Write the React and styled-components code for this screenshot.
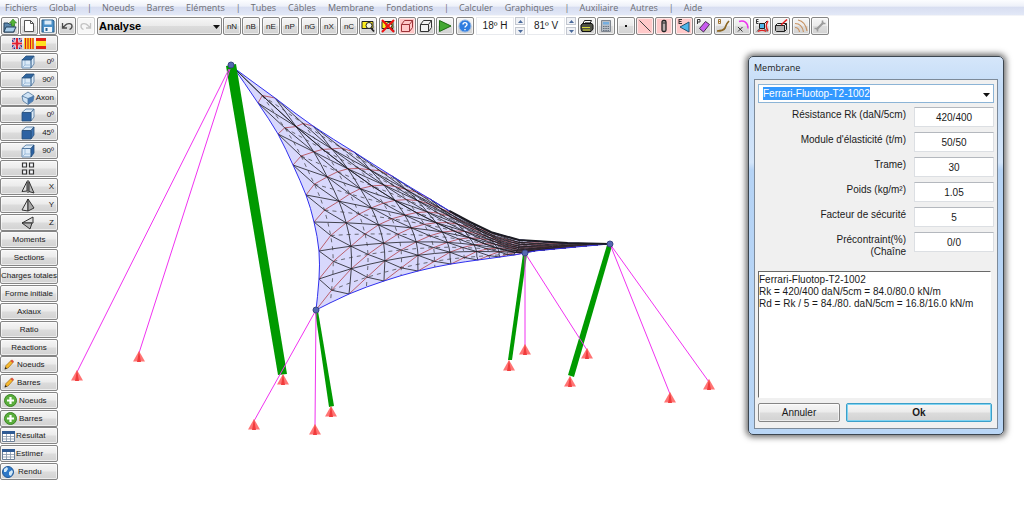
import React from "react";
import styled, { createGlobalStyle, css } from "styled-components";

const GlobalStyle = createGlobalStyle`
  *,
  *::before,
  *::after {
    box-sizing: border-box;
  }

  body {
    margin: 0;
    background: #fff;
    font-family: "Liberation Sans", Arial, sans-serif;
    font-size: 10px;
    color: #1a1a1a;
  }

  button,
  input,
  select,
  textarea {
    font: inherit;
    color: inherit;
    margin: 0;
  }
`;

const Page = styled.div`
  display: flex;
  flex-direction: column;
  min-height: 100vh;
  position: relative;
`;

const MenuBar = styled.nav`
  display: flex;
  align-items: center;
  gap: 12px;
  height: 16px;
  padding: 0 5px;
  background: linear-gradient(#fcfdff, #eef1f9 40%, #d8def1 50%, #e2e8f7);
  border-bottom: 1px solid #f3f4f8;
  font-family: "Open Sans", "Noto Sans", sans-serif;
  font-size: 9px;
  color: #6c6e75;
`;

const MenuItem = styled.button`
  padding: 0;
  border: 0;
  background: none;
  line-height: 14px;
`;

const MenuSeparator = styled.span`
  margin: 0 -2px 0 -1px;
`;

const raised = css`
  border: 1px solid #858585;
  border-radius: 2px;
  background: linear-gradient(#f6f6f6, #ebebeb 48%, #dcdcdc 52%, #d2d2d2);
  box-shadow: inset 0 0 0 1px rgba(255, 255, 255, 0.6);
`;

const ToolBar = styled.div`
  display: flex;
  flex-wrap: wrap;
  gap: 2px;
  padding: 1px 1px 0;
`;

const ToolGroup = styled.div`
  display: flex;
  gap: 1px;
`;

const ToolButton = styled.button`
  ${raised}
  display: flex;
  align-items: center;
  justify-content: center;
  width: 18px;
  height: 18px;
  padding: 0;
  font-size: 8px;
  ${(props) =>
    props.$active &&
    css`
      background: #ffc9c9;
    `}
  ${(props) =>
    props.disabled &&
    css`
      border-color: #c9c9c9;
      background: #f7f7f7;
    `}
`;

const ModeBox = styled.div`
  position: relative;
  width: 125px;
`;

const ModeSelect = styled.select`
  ${raised}
  appearance: none;
  display: block;
  width: 100%;
  height: 18px;
  padding: 0 14px 0 1px;
  font-size: 11px;
  font-weight: bold;
  color: #000;
`;

const Arrow = styled.svg`
  position: absolute;
  top: 50%;
  right: ${(props) => props.$right}px;
  margin-top: -1px;
  pointer-events: none;
`;

const AngleInput = styled.input`
  width: 38px;
  height: 18px;
  padding: 0 0 1px;
  border: 1px solid #e8eaee;
  text-align: center;
  background: #fff;
`;

const Spinner = styled.div`
  display: flex;
  flex-direction: column;
  justify-content: space-between;
  width: 10px;
  height: 18px;
`;

const SpinButton = styled.button`
  display: flex;
  align-items: center;
  justify-content: center;
  height: 8px;
  padding: 0;
  border: 1px solid #c3c7cf;
  background: #f0f2f6;
`;

const Body = styled.div`
  display: flex;
  flex: 1;
  align-items: flex-start;
`;

const SideBar = styled.div`
  display: flex;
  flex-direction: column;
  width: 58px;
  flex: none;
`;

const SideGroup = styled.div`
  display: flex;
  flex-direction: column;
  gap: 1px;
`;

const SideButton = styled.button`
  ${raised}
  display: flex;
  align-items: center;
  justify-content: ${(props) => props.$justify || "center"};
  gap: ${(props) => props.$gap || 2}px;
  height: 17px;
  padding: 0 ${(props) => props.$pad || 0}px;
  font-size: 8px;
  white-space: nowrap;
`;

const ViewButton = styled(SideButton)`
  justify-content: space-between;
  padding: 0 3px 0 20px;
  gap: 0;
`;

const Canvas = styled.main`
  flex: 1;
  min-width: 0;
`;

const Drawing = styled.svg`
  display: block;
`;

const Dialog = styled.section`
  position: absolute;
  top: 56px;
  right: 20px;
  width: 256px;
  padding: 0 5px 5px;
  border: 1px solid #3c4650;
  border-radius: 5px;
  background: linear-gradient(#d5e6fa, #c4dcf7 8%, #d3e5fa 28%, #b5d3f5 30%, #b9d6f6);
  box-shadow: 0 0 6px 2px rgba(0, 0, 0, 0.6);
`;

const DialogTitle = styled.h2`
  margin: 0;
  font-family: "Open Sans", "Noto Sans", sans-serif;
  font-size: 9px;
  font-weight: normal;
  line-height: 22px;
`;

const DialogBody = styled.form`
  display: flex;
  flex-direction: column;
  padding: 4px 3px 6px;
  border: 1px solid #7d8a99;
  background: #f0f0f0;
`;

const Combo = styled.div`
  display: flex;
  align-items: center;
  position: relative;
  height: 19px;
  padding-left: 4px;
  border: 1px solid #8cb4d6;
  background: #fff;
`;

const ComboInput = styled.input`
  field-sizing: content;
  height: 13px;
  padding: 0;
  border: 0;
  outline: 0;
  background: #3399ff;
  color: #fff;
`;

const ComboButton = styled.button`
  position: absolute;
  inset: 0 0 0 auto;
  width: 16px;
  padding: 0;
  border: 0;
  background: none;
`;

const Fields = styled.div`
  display: flex;
  flex-direction: column;
  gap: 5px;
  padding-top: 4px;
`;

const Field = styled.div`
  display: flex;
  justify-content: flex-end;
  gap: 8px;
  height: 20px;
`;

const FieldLabel = styled.label`
  padding-top: 2px;
  line-height: 12px;
  text-align: right;
  white-space: pre-line;
`;

const FieldInput = styled.input`
  width: 80px;
  padding: 0;
  border: 1px solid #dcdfe3;
  border-top-color: #b4b8be;
  text-align: center;
  background: #fff;
`;

const Report = styled.textarea`
  height: 127px;
  margin: 19px 3px 5px 0;
  padding: 2px 0;
  border: 1px solid #fff;
  border-top-color: #696969;
  border-left-color: #696969;
  outline: 0;
  resize: none;
  line-height: 12px;
  background: #fff;
`;

const Actions = styled.div`
  display: flex;
  gap: 6px;
  padding-right: 2px;
`;

const ActionButton = styled.button`
  ${raised}
  height: 19px;
  padding: 0;
  width: 82px;
  ${(props) =>
    props.$primary &&
    css`
      flex: 1;
      border-color: #3c9fc9;
      box-shadow: inset 0 0 0 1px #7ed3f2;
      font-weight: bold;
    `}
`;

/* ---------- icons ---------- */

const Icon = ({ w = 14, h = 14, children }) => (
  <svg width={w} height={h} viewBox={`0 0 ${w} ${h}`} fill="none" aria-hidden="true">
    {children}
  </svg>
);

const Caret = ({ right }) => (
  <Arrow width="7" height="4" viewBox="0 0 7 4" $right={right} aria-hidden="true">
    <path d="M0 0h7L3.500 4z" fill="#111" />
  </Arrow>
);

const icons = {
  open: (
    <Icon>
      <path d="M1 4h4l1 1h5v8H1z" fill="#5b87ad" stroke="#27435c" />
      <path d="M3 8h10l-2.500 5H1z" fill="#a9cdea" stroke="#27435c" />
      <path d="M10 0l3.500 4h-2v3h-3V4h-2z" fill="#52b437" stroke="#2f7d1b" strokeWidth=".6" />
    </Icon>
  ),
  fresh: (
    <Icon>
      <path d="M2.500 1.500h6l3 3v8h-9z" fill="#fff" stroke="#555" />
      <path d="M8.500 1.500v3h3" stroke="#555" />
    </Icon>
  ),
  save: (
    <Icon>
      <path d="M1 1h11l1 1v11H1z" fill="#4a90c8" stroke="#2a628f" />
      <path d="M3.500 1.500h7v4h-7z" fill="#dcecf8" />
      <path d="M3 8h8v5H3z" fill="#eef5fb" />
      <path d="M4.500 9h2v3h-2z" fill="#2a628f" />
    </Icon>
  ),
  undo: (
    <Icon>
      <path d="M2.500 4v5h4.500M3 8.500l2-2C7 4 12 4 12 7c0 2-1 3-2.500 3.500" stroke="#4a4a4a" strokeWidth="1.300" />
    </Icon>
  ),
  redo: (
    <Icon>
      <path d="M11.500 4v5H7M11 8.500l-2-2C7 4 2 4 2 7c0 2 1 3 2.500 3.500" stroke="#c4c4c4" strokeWidth="1.300" />
    </Icon>
  ),
  zoom: (
    <Icon>
      <path d="M1 2.500h11v7H1z" fill="#ffef1f" stroke="#222" />
      <circle cx="8" cy="6.500" r="3" fill="#f6f6e4" stroke="#222" />
      <path d="M10 9l3 3.500" stroke="#222" strokeWidth="1.800" />
    </Icon>
  ),
  zoomOff: (
    <Icon>
      <path d="M1 2.500h11v7H1z" fill="#ffef1f" stroke="#222" />
      <circle cx="8" cy="6.500" r="3" fill="#f6f6e4" stroke="#222" />
      <path d="M10 9l3 3.500" stroke="#222" strokeWidth="1.500" />
      <path d="M1 1l12 12M13 1L1 13" stroke="#f01010" strokeWidth="2" />
    </Icon>
  ),
  cubeRed: (
    <Icon>
      <path d="M1.500 5.500h8v7h-8zM1.500 5.500l3-4h8l-3 4M12.500 1.500v7l-3 4" stroke="#9c3338" />
    </Icon>
  ),
  cube: (
    <Icon>
      <path d="M1.500 5.500h8v7h-8zM1.500 5.500l3-4h8l-3 4M12.500 1.500v7l-3 4" fill="#f2f2f2" stroke="#333" />
    </Icon>
  ),
  play: (
    <Icon>
      <path d="M1.500 1.500L13 7 1.500 12.500z" fill="#43a832" stroke="#1e6a14" />
    </Icon>
  ),
  help: (
    <Icon>
      <circle cx="7" cy="7" r="6" fill="#2f7de0" stroke="#8fb4e4" />
      <path d="M5 5.500C5 3 9 3 9 5.500 9 7 7 7 7 8.500M7 10v1.300" stroke="#fff" strokeWidth="1.400" />
    </Icon>
  ),
  print: (
    <Icon>
      <path d="M4.500 1.500h7l-2 4h-7z" fill="#fff" stroke="#222" />
      <path d="M1 6l2-1.500h9L13 6v4l-2 2.500H2L1 10z" fill="#4d4f45" stroke="#111" />
      <path d="M2 8.500h8M3 11h7" stroke="#d7d93a" />
      <path d="M5 3.500h5" stroke="#777" />
    </Icon>
  ),
  calc: (
    <Icon>
      <path d="M2.500 1.500h9v11h-9z" fill="#b7bec8" stroke="#7e858f" />
      <path d="M4 3h6v2.500H4z" fill="#75aee0" />
      <path d="M4 7.500h6M4 9.500h6M4 11.500h6" stroke="#65717e" strokeDasharray="1.500 .8" />
    </Icon>
  ),
  dot: (
    <Icon>
      <path d="M6 6h2v2H6z" fill="#111" />
    </Icon>
  ),
  line: (
    <Icon>
      <path d="M1.500 1.500l11 11" stroke="#444" />
    </Icon>
  ),
  tube: (
    <Icon>
      <rect x="5" y="1.500" width="4" height="11" rx="1.500" fill="#b9adad" stroke="#222" strokeWidth="1.300" />
      <path d="M5.500 4h3" stroke="#222" />
    </Icon>
  ),
  membrane: (
    <Icon>
      <path d="M3 8l9-5v10z" fill="#4fb6ea" stroke="#24506e" />
      <path d="M2 0v5M2 .5h3M2 2.500h2.500M2 4.500h3" stroke="#222" strokeWidth=".9" />
    </Icon>
  ),
  plate: (
    <Icon>
      <path d="M3.500 9.500l6-7 4 3-6 7.500z" fill="#c95cf0" stroke="#44304e" />
      <path d="M1.500 5V.5h2.500v2.500H1.500" stroke="#222" strokeWidth=".9" />
    </Icon>
  ),
  beam: (
    <Icon>
      <path d="M1 12c5 0 7-1 8-3s1-4 4-7" stroke="#8a6420" strokeWidth="1.700" />
      <path d="M2.500 .5v4M2.500 .5h2v4h-2M2.500 2.500h2" stroke="#9a6a20" strokeWidth=".9" />
    </Icon>
  ),
  arc: (
    <Icon>
      <path d="M4 2.500c5-1.500 9 1 9 7" stroke="#ee32ee" strokeWidth="1.400" />
      <path d="M3 8l4.500 4.500M7.500 8L3 12.500" stroke="#333" />
    </Icon>
  ),
  stress: (
    <Icon>
      <path d="M4.500 4.500h5v5h-5z" fill="#4fb6ea" stroke="#222" />
      <path d="M2 12.500l3-3M12 12.500l-3-3M12 2l-3 3" stroke="#222" />
      <path d="M13 2c-2 3-2 7 0 10M3 12.500c2-1.500 6-1.500 8 0" stroke="#e02020" strokeWidth="1.400" />
      <path d="M1.500 .5v4M1.500 .5h2M1.500 2.500h2M1.500 4.500h2" stroke="#222" strokeWidth=".9" />
    </Icon>
  ),
  cut: (
    <Icon>
      <path d="M1.500 6.500h9v6h-8l-1-1z" fill="#b4b4b4" stroke="#222" />
      <path d="M1.500 6.500l2-2h9v6l-2 2M10.500 6.500l2-2" fill="none" stroke="#222" />
      <path d="M7 6l6-5.500" stroke="#e32020" strokeWidth="1.500" />
    </Icon>
  ),
  arcs: (
    <Icon>
      <path d="M1 8.500c2.500 0 4 1.500 4.500 4.500M1 4.500c5 0 7.500 3 8.500 8.500M4 1c5 1 8 5 9 11" stroke="#c89262" strokeWidth="1.200" />
    </Icon>
  ),
  wrench: (
    <Icon>
      <path d="M3.500 10.500l7-7" stroke="#9b9b9b" strokeWidth="2.200" />
      <path d="M9.500 1.500v3h3M4.500 12.500v-3h-3" stroke="#9b9b9b" strokeWidth="1.600" />
    </Icon>
  ),
  top: (
    <Icon>
      <path d="M1 4.500h9V13H1zM10 4.500L13 1v8l-3 4z" fill="#dcebf8" stroke="#4c739c" strokeWidth=".8" />
      <path d="M4 4.500V10l-3 3M4 10h6" stroke="#8fb2d4" strokeWidth=".8" />
      <path d="M1 5L5 1h8l-3 4z" fill="#2f659f" stroke="#28507c" strokeWidth=".8" />
    </Icon>
  ),
  axon: (
    <Icon>
      <path d="M7 1l6 4-1 5-5 3.500L2 10 1 5z" fill="#cfe3f5" stroke="#4c739c" strokeWidth=".8" />
      <path d="M7 7.500L13 5l-1 5-5 3.500z" fill="#4a7cb5" />
      <path d="M1 5l6 2.500V13M7 7.500L13 5" stroke="#4c739c" strokeWidth=".8" />
    </Icon>
  ),
  front: (
    <Icon>
      <path d="M1 4.500L5 1h8l-3 3.500zM10 4.500L13 1v8l-3 4z" fill="#dcebf8" stroke="#4c739c" strokeWidth=".8" />
      <path d="M1 4.500h9V13H1z" fill="#2c62a3" stroke="#28507c" strokeWidth=".8" />
    </Icon>
  ),
  front45: (
    <Icon>
      <path d="M1 4.500L5 1h8l-3 3.500z" fill="#dcebf8" stroke="#4c739c" strokeWidth=".8" />
      <path d="M10 4.500L13 1v8l-3 4z" fill="#3f74b2" stroke="#28507c" strokeWidth=".8" />
      <path d="M1 4.500h9V13H1z" fill="#2c62a3" stroke="#28507c" strokeWidth=".8" />
    </Icon>
  ),
  side: (
    <Icon>
      <path d="M1 4.500L5 1h8l-3 3.500zM1 4.500h9V13H1z" fill="#dcebf8" stroke="#4c739c" strokeWidth=".8" />
      <path d="M10 4.500L13 1v8l-3 4z" fill="#2c62a3" stroke="#28507c" strokeWidth=".8" />
      <path d="M4 4.500V10l-3 3M4 10h6" stroke="#8fb2d4" strokeWidth=".8" />
    </Icon>
  ),
  four: (
    <Icon w={14} h={13}>
      <path d="M1.500 1h4v4h-4zM8.500 1h4v4h-4zM1.500 8h4v4h-4zM8.500 8h4v4h-4z" fill="#f4f6fa" stroke="#333" strokeWidth="1.200" />
    </Icon>
  ),
  mirrorX: (
    <Icon>
      <path d="M6 1.500v9.500L1 11.500z" fill="#e4e4e4" stroke="#333" />
      <path d="M8 1.500v10l5 1.500z" fill="#b8b8b8" stroke="#333" />
      <path d="M7 0v13" stroke="#333" />
    </Icon>
  ),
  mirrorY: (
    <Icon>
      <path d="M7 1v12l-6-1z" fill="#dedede" stroke="#333" />
      <path d="M7 1v12l6-3z" fill="#a8a8a8" stroke="#333" />
    </Icon>
  ),
  mirrorZ: (
    <Icon>
      <path d="M12 1L1 7h11z" fill="#dedede" stroke="#333" />
      <path d="M1 7h10l-2 6z" fill="#b5b5b5" stroke="#333" />
    </Icon>
  ),
  pencil: (
    <Icon w={10} h={11}>
      <path d="M1 10l1-3.500L7 1.500l2 2L4 9z" fill="#f7b92c" stroke="#9c6a14" strokeWidth=".7" />
      <path d="M6.500 2L8 .5l2 2L8.500 4z" fill="#d9503c" />
      <path d="M.5 10.500l1-2.500 1.500 1.500z" fill="#222" />
    </Icon>
  ),
  plus: (
    <Icon w={13} h={13}>
      <circle cx="6.500" cy="6.500" r="6" fill="#5aae3c" stroke="#3d8426" />
      <path d="M6.500 3v7M3 6.500h7" stroke="#fff" strokeWidth="2.200" />
    </Icon>
  ),
  table: (
    <Icon w={13} h={12}>
      <path d="M.5 1.500h12v10H.5z" fill="#fff" stroke="#6b7f97" />
      <path d="M0 1h13v3H0z" fill="#2f5b94" />
      <path d="M4.500 4v7M8.500 4v7M1 6.500h11M1 9h11" stroke="#8494a8" strokeWidth=".8" />
    </Icon>
  ),
  globe: (
    <Icon w={12} h={12}>
      <circle cx="6" cy="6" r="5.500" fill="#2e78c7" stroke="#235a97" />
      <path d="M2 3l3-2 1 2-2 3H2zM7 6l3-2 1 2-2 4-2-1z" fill="#d3e9f7" />
    </Icon>
  ),
};

const Flags = () => (
  <Icon w={34} h={11}>
    <path d="M0 0h10v11H0z" fill="#20308c" />
    <path d="M0 0l10 11M10 0L0 11" stroke="#dfe3f6" strokeWidth="1.600" />
    <path d="M5 0v11M0 5.500h10" stroke="#fff" strokeWidth="3.400" />
    <path d="M0 0l10 11M10 0L0 11" stroke="#d84050" strokeWidth=".6" />
    <path d="M5 0v11M0 5.500h10" stroke="#e02030" strokeWidth="2" />
    <path d="M12 0h10v11H12z" fill="#ffdf20" />
    <path d="M13.500 0v11M16 0v11M18.500 0v11M21 0v11" stroke="#d8201c" strokeWidth="1.200" />
    <path d="M24 0h10v11H24z" fill="#e02018" />
    <path d="M24 3h10v5H24z" fill="#ffe020" />
  </Icon>
);

/* ---------- data ---------- */

const menus = [
  "Fichiers", "Global", "|", "Noeuds", "Barres", "Eléments", "|", "Tubes", "Câbles",
  "Membrane", "Fondations", "|", "Calculer", "Graphiques", "|", "Auxiliaire", "Autres",
  "|", "Aide",
];

const fileTools = [
  { icon: "open", name: "Ouvrir" },
  { icon: "fresh", name: "Nouveau" },
  { icon: "save", name: "Enregistrer" },
  { icon: "undo", name: "Annuler l'action" },
  { icon: "redo", name: "Rétablir", disabled: true },
];

const nodeTools = [
  [{ text: "nN" }, { text: "nB" }],
  [{ text: "nE" }, { text: "nP" }],
  [{ text: "nG" }, { text: "nX" }],
  [{ text: "nC" }, { icon: "zoom", name: "Zoom" }],
  [
    { icon: "zoomOff", name: "Annuler le zoom" },
    { icon: "cubeRed", name: "Perspective", active: true },
    { icon: "cube", name: "Volume" },
    { icon: "play", name: "Animer" },
  ],
  [{ icon: "help", name: "Aide" }],
];

const drawTools = [
  [{ icon: "print", name: "Imprimer" }, { icon: "calc", name: "Calculatrice" }],
  [
    { icon: "dot", name: "Points" },
    { icon: "line", name: "Lignes", active: true },
    { icon: "tube", name: "Tubes", active: true },
  ],
  [{ icon: "membrane", name: "Eléments", active: true }, { icon: "plate", name: "Plaques" }],
  [{ icon: "beam", name: "Barres" }, { icon: "arc", name: "Arcs" }],
  [{ icon: "stress", name: "Efforts" }, { icon: "cut", name: "Coupe" }],
  [{ icon: "arcs", name: "Courbes" }, { icon: "wrench", name: "Options" }],
];

const viewButtons = [
  [
    { icon: "top", text: "0º" },
    { icon: "top", text: "90º" },
    { icon: "axon", text: "Axon" },
  ],
  [
    { icon: "front", text: "0º" },
    { icon: "front45", text: "45º" },
    { icon: "side", text: "90º" },
    { icon: "four", text: "" },
    { icon: "mirrorX", text: "X" },
    { icon: "mirrorY", text: "Y" },
    { icon: "mirrorZ", text: "Z" },
  ],
];

const resultButtons = [
  "Moments", "Sections", "Charges totales", "Forme initiale", "Axiaux", "Ratio", "Réactions",
];

const editButtons = [
  { icon: "pencil", text: "Noeuds", pad: 3, gap: 3 },
  { icon: "pencil", text: "Barres", pad: 3, gap: 3 },
  { icon: "plus", text: "Noeuds", pad: 3, gap: 2 },
  { icon: "plus", text: "Barres", pad: 3, gap: 2 },
];

const outputButtons = [
  { icon: "table", text: "Résultat", pad: 1, gap: 1 },
  { icon: "table", text: "Estimer", pad: 1, gap: 1 },
  { icon: "globe", text: "Rendu", pad: 1, gap: 4 },
];

const fields = [
  { id: "rk", label: "Résistance Rk (daN/5cm)", value: "420/400" },
  { id: "module", label: "Module d'élasticité (t/m)", value: "50/50" },
  { id: "trame", label: "Trame)", value: "30" },
  { id: "poids", label: "Poids (kg/m²)", value: "1.05" },
  { id: "securite", label: "Facteur de sécurité", value: "5" },
  { id: "precontraint", label: "Précontraint(%)\n(Chaîne", value: "0/0" },
];

const report = `Ferrari-Fluotop-T2-1002
Rk = 420/400 daN/5cm = 84.0/80.0 kN/m
Rd = Rk / 5 = 84./80. daN/5cm = 16.8/16.0 kN/m`;

/* ---------- model ---------- */

// the four edges of the membrane, nine nodes each
const edgeAB = [[234, 68], [258, 103], [278, 134], [293, 165], [306, 195], [314, 222], [319, 251], [319, 279], [316, 310]];
const edgeAD = [[234, 68], [275, 98], [313, 126], [354, 152], [392, 176], [430, 199], [470, 222], [519, 240], [610, 244]];
const edgeBC = [[316, 310], [349, 294], [384, 281], [418, 271], [451, 264], [478, 260], [500, 257], [514, 255], [525, 253]];
const edgeDC = [[610, 244], [598, 245], [587, 246], [576, 247], [566, 248], [555, 249], [545, 250], [535, 251], [525, 253]];
const N = 8;

// Catmull-Rom through the nodes of one edge
const along = (edge, t) => {
  const i = Math.min(Math.floor(t), N - 1);
  const f = t - i;
  const p0 = edge[Math.max(i - 1, 0)];
  const p1 = edge[i];
  const p2 = edge[i + 1];
  const p3 = edge[Math.min(i + 2, N)];
  return [0, 1].map(
    (k) =>
      0.5 *
      (2 * p1[k] +
        (p2[k] - p0[k]) * f +
        (2 * p0[k] - 5 * p1[k] + 4 * p2[k] - p3[k]) * f * f +
        (3 * p1[k] - p0[k] - 3 * p2[k] + p3[k]) * f * f * f)
  );
};

// Coons patch between the edges, i runs from A to B and j from A to D
const node = (i, j) => {
  const u = i / N;
  const v = j / N;
  const ab = along(edgeAB, i);
  const dc = along(edgeDC, i);
  const ad = along(edgeAD, j);
  const bc = along(edgeBC, j);
  return [0, 1].map(
    (k) =>
      (1 - v) * ab[k] + v * dc[k] + (1 - u) * ad[k] + u * bc[k] -
      ((1 - u) * (1 - v) * edgeAB[0][k] + u * (1 - v) * edgeAB[N][k] +
        (1 - u) * v * edgeAD[N][k] + u * v * edgeBC[N][k])
  );
};

const toPath = (points) => "M" + points.map((p) => p.map((n) => n.toFixed(1)).join(" ")).join("L");

const walk = (i, j, di, dj) => {
  const points = [];
  while (i >= 0 && i <= N && j >= 0 && j <= N) {
    points.push(node(i, j));
    i += di;
    j += dj;
  }
  return points.length > 1 ? toPath(points) : "";
};

const solid = [];
const dashed = [];
const red = [];
for (let n = 1; n < N; n++) {
  solid.push(walk(n, 0, 0, 0.5), walk(0, n, 0.5, 0));
}
for (let n = 0; n < N; n++) {
  solid.push(walk(n, 0, 0.5, 0.5), walk(0, n, 0.5, 0.5));
  dashed.push(walk(n + 0.5, 0.5, 0, 0.5), walk(0.5, n + 0.5, 0.5, 0));
}
for (let n = 1; n <= N; n++) {
  red.push(walk(n, 0, -0.5, 0.5), walk(N, n, -0.5, 0.5));
}
const edgePoints = (edge) => Array.from({ length: 2 * N + 1 }, (_, i) => along(edge, i / 2));
const outline =
  toPath([
    ...edgePoints(edgeAB),
    ...edgePoints(edgeBC),
    ...edgePoints(edgeDC).reverse(),
    ...edgePoints(edgeAD).reverse(),
  ]) + "z";

const cables = [
  [229, 69, 77, 372], [230, 69, 139, 353], [316, 310, 254, 421], [316, 310, 315, 426],
  [525, 253, 525, 346], [525, 253, 587, 350], [610, 244, 670, 394], [610, 244, 709, 382],
];

const supports = [
  [77, 371], [139, 352], [283, 375], [254, 420], [315, 425], [331, 407],
  [509, 361], [525, 345], [587, 349], [570, 377], [670, 393], [709, 380],
];

const joints = [[231, 65], [316, 310], [525, 253], [610, 244]];

const Structure = () => (
  <Drawing width="680" height="410" viewBox="58 35 680 410" fill="none" role="img" aria-label="Membrane">
    <path d={outline} fill="#d8d8fc" />
    <path d={dashed.join("")} stroke="#4a4a50" strokeWidth=".8" strokeDasharray="4 4" />
    <path d={red.join("")} stroke="#b5525c" strokeWidth=".9" />
    <path d={solid.join("")} stroke="#1c1c22" strokeWidth=".8" />
    <path d={outline} stroke="#3030ee" />
    <path d={toPath(edgePoints(edgeAD).slice(11))} stroke="#1c1c22" strokeWidth="2" />
    <path d="M226 66L236 64 287 374 278 375z" fill="#009a00" />
    <path d="M315 311h3L334 406l-5 1z" fill="#009a00" />
    <path d="M523 254h4L512 360l-4 0z" fill="#009a00" />
    <path d="M607 245l5 1L574 377l-6-2z" fill="#009a00" />
    {cables.map(([x1, y1, x2, y2]) => (
      <path key={`${x2}-${y2}`} d={`M${x1} ${y1}L${x2} ${y2}`} stroke="#f032f0" />
    ))}
    {supports.map(([x, y]) => (
      <g key={`${x}-${y}`}>
        <path d={`M${x} ${y - 1}l6 10.500h-12z`} fill="#ff7474" />
        <path d={`M${x} ${y - 1}l2 11h-4z`} fill="#f03c3c" />
      </g>
    ))}
    {joints.map(([x, y]) => (
      <circle key={`${x}-${y}`} cx={x} cy={y} r="3" fill="#5468b0" stroke="#3a4684" />
    ))}
  </Drawing>
);

/* ---------- parts ---------- */

const Tools = ({ items }) => (
  <ToolGroup>
    {items.map((item) => (
      <ToolButton
        key={item.icon || item.text}
        type="button"
        $active={item.active}
        disabled={item.disabled}
        aria-label={item.name}
      >
        {item.icon ? icons[item.icon] : item.text}
      </ToolButton>
    ))}
  </ToolGroup>
);

const Angle = ({ label, value }) => (
  <ToolGroup>
    <AngleInput aria-label={label} defaultValue={value} />
    <Spinner>
      <SpinButton type="button" aria-label="Plus">
        <Icon w={5} h={3}>
          <path d="M0 3h5L2.500 0z" fill="#4a6a9c" />
        </Icon>
      </SpinButton>
      <SpinButton type="button" aria-label="Moins">
        <Icon w={5} h={3}>
          <path d="M0 0h5L2.500 3z" fill="#4a6a9c" />
        </Icon>
      </SpinButton>
    </Spinner>
  </ToolGroup>
);

const LeftButtons = ({ items }) => (
  <SideGroup>
    {items.map((item) => (
      <SideButton
        key={item.icon + item.text}
        type="button"
        $justify="flex-start"
        $pad={item.pad}
        $gap={item.gap}
      >
        {icons[item.icon]}
        {item.text}
      </SideButton>
    ))}
  </SideGroup>
);

const MembraneDialog = () => (
  <Dialog role="dialog" aria-labelledby="dialog-title">
    <DialogTitle id="dialog-title">Membrane</DialogTitle>
    <DialogBody onSubmit={(e) => e.preventDefault()}>
      <Combo>
        <ComboInput aria-label="Type de membrane" defaultValue="Ferrari-Fluotop-T2-1002" />
        <ComboButton type="button" aria-label="Choisir">
          <Caret right={3} />
        </ComboButton>
      </Combo>
      <Fields>
        {fields.map((field) => (
          <Field key={field.id}>
            <FieldLabel htmlFor={field.id}>{field.label}</FieldLabel>
            <FieldInput id={field.id} defaultValue={field.value} />
          </Field>
        ))}
      </Fields>
      <Report aria-label="Rapport" defaultValue={report} spellCheck={false} />
      <Actions>
        <ActionButton type="button">Annuler</ActionButton>
        <ActionButton type="submit" $primary>
          Ok
        </ActionButton>
      </Actions>
    </DialogBody>
  </Dialog>
);

const App = () => {
  return (
    <Page>
      <GlobalStyle />
      <MenuBar>
        {menus.map((menu, i) =>
          menu === "|" ? (
            <MenuSeparator key={i}>|</MenuSeparator>
          ) : (
            <MenuItem key={i} type="button">{menu}</MenuItem>
          )
        )}
      </MenuBar>
      <ToolBar>
        <Tools items={fileTools} />
        <ToolGroup>
          <ModeBox>
            <ModeSelect aria-label="Mode" defaultValue="Analyse">
              <option>Analyse</option>
            </ModeSelect>
            <Caret right={2} />
          </ModeBox>
          <Tools items={nodeTools[0]} />
        </ToolGroup>
        {nodeTools.slice(1).map((items, i) => (
          <Tools key={i} items={items} />
        ))}
        <Angle label="Angle horizontal" value="18º H" />
        <Angle label="Angle vertical" value="81º V" />
        {drawTools.map((items, i) => (
          <Tools key={i} items={items} />
        ))}
      </ToolBar>
      <Body>
        <SideBar>
          <SideGroup>
            <SideButton type="button" aria-label="Langue">
              <Flags />
            </SideButton>
            {viewButtons[0].map((item) => (
              <ViewButton key={item.text} type="button">
                {icons[item.icon]}
                {item.text}
              </ViewButton>
            ))}
          </SideGroup>
          <SideGroup>
            {viewButtons[1].map((item) => (
              <ViewButton key={item.icon} type="button" aria-label={item.text ? undefined : "Quatre vues"}>
                {icons[item.icon]}
                {item.text}
              </ViewButton>
            ))}
          </SideGroup>
          <SideGroup>
            {resultButtons.map((text) => (
              <SideButton key={text} type="button">
                {text}
              </SideButton>
            ))}
          </SideGroup>
          <LeftButtons items={editButtons} />
          <LeftButtons items={outputButtons} />
        </SideBar>
        <Canvas>
          <Structure />
        </Canvas>
      </Body>
      <MembraneDialog />
    </Page>
  );
};

export default App;
